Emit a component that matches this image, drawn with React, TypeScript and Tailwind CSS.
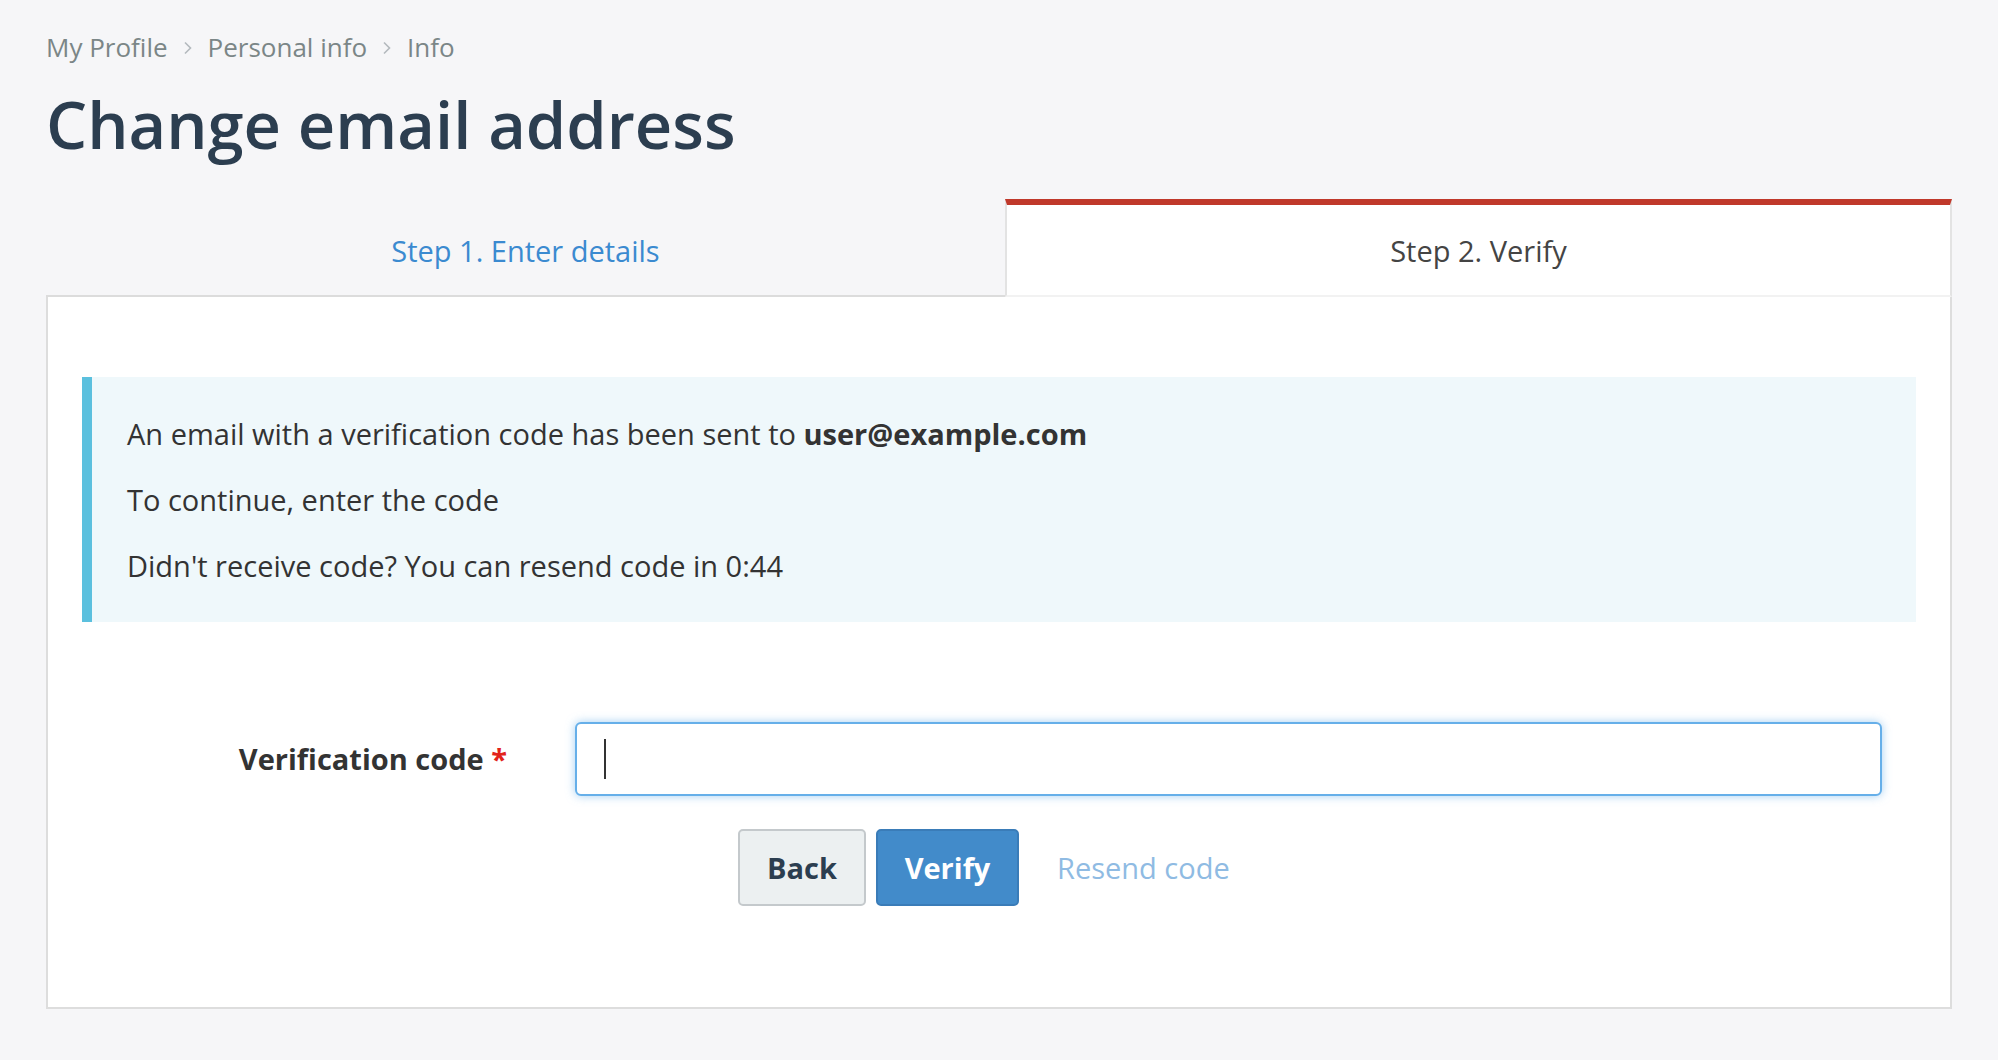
import React from 'react'

function Chevron() {
  return (
    <svg width="10" height="14" viewBox="0 0 10 14" className="mx-[15px] mt-[2px]" fill="none">
      <path d="M2 1.5 L7.5 7 L2 12.5" stroke="#b3b9bd" strokeWidth="1.6" />
    </svg>
  )
}

export default function App() {
  return (
    <div className="min-h-screen bg-[#f6f6f8] px-[46px] pt-[28px] font-['Open_Sans',sans-serif] text-[#333333]">
      {/* breadcrumbs */}
      <nav className="flex items-center text-[26px] leading-[38px] text-[#7b8687]">
        <span>My Profile</span>
        <Chevron />
        <span>Personal info</span>
        <Chevron />
        <span>Info</span>
      </nav>

      <h1 className="mt-[19px] text-[65px] font-semibold leading-[78px] text-[#2c3e50]">Change email address</h1>

      {/* step tabs */}
      <div className="mt-[36px] flex">
        <div className="flex h-[98px] flex-1 items-center justify-center border-b-2 border-[#dcdcdc] pt-[8px] text-[29px] text-[#3b8ad0]">
          Step 1. Enter details
        </div>
        <div className="flex h-[98px] w-[947px] items-center justify-center border-x-2 border-t-[6px] border-b-2 border-x-[#e3e3e3] border-t-[#c0392b] border-b-[#f2f2f2] bg-white pt-[2px] text-[29px] text-[#444444]">
          Step 2. Verify
        </div>
      </div>

      <div className="border-2 border-t-0 border-[#dddddd] bg-white px-[34px] pt-[80px] pb-[101px]">
        <div className="flex flex-col gap-[29px] border-l-[10px] border-[#5bc0de] bg-[#eff8fb] pt-[38px] pb-[38px] pl-[35px] text-[29px] leading-[37px] text-[#333333]">
          <p>
            An email with a verification code has been sent to <b className="font-bold">user@example.com</b>
          </p>
          <p>To continue, enter the code</p>
          <p>Didn't receive code? You can resend code in 0:44</p>
        </div>

        <div className="mt-[100px] flex items-center pr-[34px]">
          <label className="w-[425px] text-right text-[29px] font-bold text-[#333333]">
            Verification code <span className="text-[#e2231a]">*</span>
          </label>
          <div className="ml-[68px] flex h-[74px] flex-1 items-center rounded-[6px] border-2 border-[#66afe9] bg-white pl-[27px] shadow-[0_0_10px_rgba(102,175,233,0.6)]">
            <div className="h-[40px] w-[2px] bg-[#333333]" />
          </div>
        </div>

        <div className="mt-[33px] flex items-center pl-[656px]">
          <button className="h-[77px] w-[128px] rounded-[5px] border-2 border-[#c4c9cc] bg-[#ecf0f1] text-[29px] font-bold text-[#2c3e50]">
            Back
          </button>
          <button className="ml-[10px] h-[77px] w-[143px] rounded-[5px] border-2 border-[#3a7cb8] bg-[#428bca] text-[29px] font-bold text-white">
            Verify
          </button>
          <a className="ml-[38px] text-[29px] text-[#8fbbe3]">Resend code</a>
        </div>
      </div>
    </div>
  )
}
